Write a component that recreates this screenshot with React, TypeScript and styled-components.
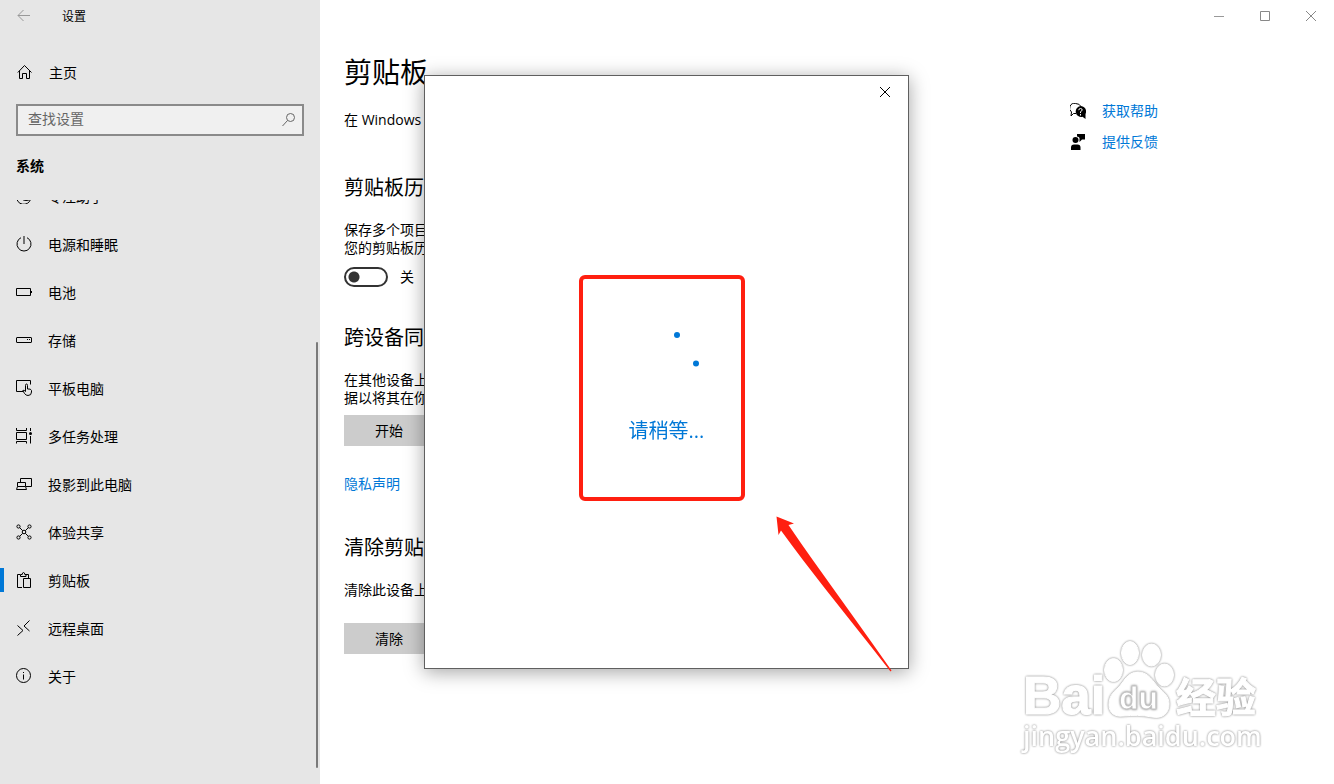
import React from "react";
import styled, { createGlobalStyle } from "styled-components";

const ACCENT = "#0078d7";
const MARK_RED = "#ff1f10";

const GlobalStyle = createGlobalStyle`
  * { box-sizing: border-box; }
  body {
    margin: 0;
    background: #fff;
    color: #000;
    font: 14px/18px "Open Sans", "Noto Sans CJK SC", sans-serif;
  }
  h1, h2, p, ul { margin: 0; padding: 0; }
  button, input { font: inherit; color: inherit; }
`;

const Page = styled.div`
  display: flex;
  min-height: 100vh;
`;

const Sidebar = styled.aside`
  position: relative;
  display: flex;
  flex-direction: column;
  flex: 0 0 320px;
  background: #e6e6e6;
`;

const TitleBar = styled.header`
  display: flex;
  align-items: center;
  gap: 22px;
  height: 32px;
  padding-left: 8px;
  font-size: 12px;
`;

const IconButton = styled.button<{ $width: number; $color?: string }>`
  display: flex;
  align-items: center;
  justify-content: center;
  width: ${(p) => p.$width}px;
  height: 32px;
  padding: 0;
  border: 0;
  background: transparent;
  color: ${(p) => p.$color ?? "#000"};
`;

const Label = styled.span`
  padding-top: 2px;
`;

const Glyph = styled.svg`
  display: block;
  flex: none;
  width: 16px;
  height: 16px;
  fill: none;
  stroke: currentColor;
  stroke-width: 1;
`;

const HomeLink = styled.a`
  display: flex;
  align-items: center;
  gap: 16px;
  height: 48px;
  margin-top: 16px;
  padding-left: 17px;
  color: #000;
  text-decoration: none;
`;

const SearchBox = styled.label`
  display: flex;
  align-items: center;
  height: 32px;
  margin: 8px 16px 0;
  padding: 0 5px 2px 10px;
  border: 2px solid #8a8a8a;
  background: #f0f0f0;
  color: #666;
`;

const SearchInput = styled.input`
  flex: 1;
  min-width: 0;
  padding: 0;
  border: 0;
  outline: 0;
  background: transparent;
  &::placeholder { color: #666; opacity: 1; }
`;

const GroupTitle = styled.h2`
  margin: 21px 16px 0;
  height: 43px;
  font-size: 14px;
  line-height: 18px;
  font-weight: 700;
`;

const NavScroll = styled.nav`
  flex: 1;
  overflow: hidden;
`;

const NavList = styled.ul`
  margin-top: -28px;
  list-style: none;
`;

const NavItem = styled.a<{ $active?: boolean }>`
  display: flex;
  align-items: center;
  gap: 16px;
  height: 48px;
  padding-left: 16px;
  color: #000;
  text-decoration: none;
  background: linear-gradient(${(p) => (p.$active ? `${ACCENT}, ${ACCENT}` : "transparent, transparent")}) left center / 4px 24px no-repeat;
`;

const ScrollThumb = styled.div`
  position: absolute;
  right: 2px;
  bottom: 16px;
  width: 2px;
  height: 426px;
  border-radius: 1px;
  background: #7a7a7a;
`;

const Main = styled.main`
  flex: 1;
  min-width: 0;
`;

const WindowControls = styled.div`
  display: flex;
  justify-content: flex-end;
  height: 32px;
`;

const Columns = styled.div`
  display: grid;
  grid-template-columns: minmax(0, 1fr) 264px;
  padding-left: 24px;
`;

const PageTitle = styled.h1`
  margin-top: 22px;
  font-size: 28px;
  line-height: 36px;
  font-weight: 400;
`;

const Intro = styled.p`
  margin-top: 21px;
`;

const Section = styled.section<{ $gap: number }>`
  margin-top: ${(p) => p.$gap}px;
`;

const SectionTitle = styled.h2`
  margin-bottom: 19px;
  font-size: 20px;
  line-height: 28px;
  font-weight: 400;
`;

const ToggleRow = styled.label`
  display: flex;
  align-items: center;
  gap: 12px;
  height: 20px;
  margin-top: 10px;
`;

const Toggle = styled.input`
  appearance: none;
  width: 44px;
  height: 20px;
  margin: 0;
  border: 2px solid #333;
  border-radius: 10px;
  background: radial-gradient(circle at 8px 8px, #333 5px, transparent 6px);
`;

const ActionButton = styled.button<{ $gap: number }>`
  display: block;
  width: 90px;
  height: 31px;
  margin-top: ${(p) => p.$gap}px;
  padding: 0;
  border: 0;
  background: #ccc;
`;

const TextLink = styled.a`
  color: ${ACCENT};
  text-decoration: none;
`;

const PrivacyRow = styled.p`
  margin-top: 29px;
`;

const HelpList = styled.div`
  display: flex;
  flex-direction: column;
  gap: 13px;
  padding-top: 70px;
`;

const HelpRow = styled(TextLink)`
  display: flex;
  align-items: center;
  gap: 16px;
`;

const Overlay = styled.div`
  position: fixed;
  inset: 75px 1px 0 0;
  display: flex;
  justify-content: center;
  align-items: flex-start;
  pointer-events: none;
`;

const Dialog = styled.div`
  position: relative;
  display: flex;
  flex-direction: column;
  align-items: center;
  width: 485px;
  height: 594px;
  border: 1px solid #5f5f5f;
  background: #fff;
  box-shadow: 0 3px 18px rgba(0, 0, 0, 0.36);
  pointer-events: auto;
`;

const DialogBar = styled.div`
  display: flex;
  justify-content: flex-end;
  align-self: stretch;
  height: 32px;
`;

const Spinner = styled.svg`
  margin-top: 220px;
  width: 65px;
  height: 72px;
  fill: ${ACCENT};
`;

const Waiting = styled.p`
  margin-top: 17px;
  color: ${ACCENT};
  font-size: 20px;
  line-height: 28px;
`;

const MarkFrame = styled.div`
  position: absolute;
  left: 154px;
  top: 199px;
  width: 166px;
  height: 226px;
  border: 4px solid ${MARK_RED};
  border-radius: 6px;
`;

const MarkArrow = styled.svg`
  position: absolute;
  left: 351px;
  top: 440px;
  width: 116px;
  height: 157px;
  fill: ${MARK_RED};
`;

const Watermark = styled.svg`
  position: fixed;
  right: 64px;
  bottom: 24px;
  width: 254px;
  height: 124px;
  fill: #fff;
  stroke: #fff;
  stroke-width: 1;
  stroke-linejoin: round;
  & > * {
    filter: drop-shadow(0 0 1px rgba(0, 0, 0, 0.36)) drop-shadow(0 0 1px rgba(0, 0, 0, 0.16));
  }
`;

const nav: { label: string; icon: React.ReactNode; active?: boolean }[] = [
  { label: "专注助手", icon: <path d="M5.500.500Q0 3 .8 9a7 6.500 0 0 0 13.700 2.500Q7 14.500 4.500 9 3.300 4.500 5.500.500Z" /> },
  { label: "电源和睡眠", icon: <path d="M8 0v8M5 1.700a7 7 0 1 0 6 0" /> },
  { label: "电池", icon: <><path d="M.5 4.500h14v7H.5Z" /><path d="M15.500 7v2" /></> },
  { label: "存储", icon: <><rect x=".5" y="5.500" width="15" height="5" rx=".5" /><path d="M11 7.500h1M13 7.500h1" /></> },
  {
    label: "平板电脑",
    icon: (
      <>
        <path d="M7 11.500H.5v-11h14v4" />
        <path d="M9.500 11.500V5.500q0-1.500 1-1.500t1 1.500V9q3.500-.5 4 1.500v1.500q0 3.500-3.500 3.500-2 0-3.500-2L6.800 10.500q1.200-1 2.700 1" />
      </>
    ),
  },
  {
    label: "多任务处理",
    icon: (
      <>
        <path d="M.5 0v2.500h10V0M.5 15.500V13.500h10v2M.5 4.500h10v7H.5ZM14.500 0v3M14.500 8v7.500" />
        <circle cx="14.500" cy="5.500" r="1.500" fill="currentColor" stroke="none" />
      </>
    ),
  },
  { label: "投影到此电脑", icon: <path d="M4.500 6V2.500h11v8H10M1.500 6.500h8v4h-8ZM1.500 10.500L.5 13.500h10l-1-3" /> },
  {
    label: "体验共享",
    icon: (
      <>
        <circle cx="2.500" cy="2.500" r="1.600" /><circle cx="13.500" cy="2.500" r="1.600" />
        <circle cx="2.500" cy="13.500" r="1.600" /><circle cx="13.500" cy="13.500" r="1.600" />
        <circle cx="8" cy="8" r="1.800" />
        <path d="M3.700 3.700l3 3M12.300 3.700l-3 3M3.700 12.300l3-3M12.300 12.300l-3-3" />
      </>
    ),
  },
  {
    label: "剪贴板",
    active: true,
    icon: (
      <>
        <path d="M6 15.500H1.500v-13H4M10 2.500h2.500V6M4.500 4.500v-2h1.700q.1-2 1.300-2t1.300 2h1.200v2Z" />
        <path d="M7.500 6.500h7v9h-7Z" />
      </>
    ),
  },
  { label: "远程桌面", icon: <path d="M1.500 5.500l5.500 5-5.500 5M13.500.5l-5.500 5.500 5.500 5" /> },
  { label: "关于", icon: <><circle cx="7.500" cy="7.500" r="7" /><path d="M7.500 6.500v5M7.500 4v1" /></> },
];

export default function App() {
  return (
    <>
      <GlobalStyle />
      <Page>
        <Sidebar>
          <TitleBar>
            <IconButton $width={32} $color="#999" aria-label="后退">
              <Glyph viewBox="0 0 16 16"><path d="M14 7.500H2M7.500 2L2 7.500 7.500 13" /></Glyph>
            </IconButton>
            <Label>设置</Label>
          </TitleBar>
          <HomeLink href="#home">
            <Glyph viewBox="0 0 16 16"><path d="M.8 8.500L7.500 1.500l7 7M2.500 6.700v7.800h3v-5h4v5h3V6.700" /></Glyph>
            <Label>主页</Label>
          </HomeLink>
          <SearchBox>
            <SearchInput type="text" placeholder="查找设置" aria-label="查找设置" />
            <Glyph viewBox="0 0 16 16"><circle cx="9.500" cy="6.500" r="4" /><path d="M6.500 9.500L1.500 15" /></Glyph>
          </SearchBox>
          <GroupTitle>系统</GroupTitle>
          <NavScroll>
            <NavList>
              {nav.map((n) => (
                <li key={n.label}>
                  <NavItem href="#" $active={n.active}>
                    <Glyph viewBox="0 0 16 16">{n.icon}</Glyph>
                    <Label>{n.label}</Label>
                  </NavItem>
                </li>
              ))}
            </NavList>
          </NavScroll>
          <ScrollThumb />
        </Sidebar>

        <Main>
          <WindowControls>
            <IconButton $width={46} $color="#999" aria-label="最小化">
              <Glyph viewBox="0 0 16 16"><path d="M3 8.500h10" /></Glyph>
            </IconButton>
            <IconButton $width={46} $color="#888" aria-label="最大化">
              <Glyph viewBox="0 0 16 16"><path d="M3.500 3.500h9v9h-9Z" /></Glyph>
            </IconButton>
            <IconButton $width={46} $color="#888" aria-label="关闭">
              <Glyph viewBox="0 0 16 16"><path d="M3 3l10 10M13 3L3 13" /></Glyph>
            </IconButton>
          </WindowControls>
          <Columns>
            <div>
              <PageTitle>剪贴板</PageTitle>
              <Intro>在 Windows 中复制或剪切某些内容时</Intro>
              <Section $gap={45}>
                <SectionTitle>剪贴板历史记录</SectionTitle>
                <p>保存多个项目到剪贴板以备稍后使用<br />您的剪贴板历史记录并粘贴其中的内容</p>
                <ToggleRow>
                  <Toggle type="checkbox" role="switch" />
                  关
                </ToggleRow>
              </Section>
              <Section $gap={37}>
                <SectionTitle>跨设备同步</SectionTitle>
                <p>在其他设备上粘贴文本。登录后可同步数<br />据以将其在你的设备之间使用</p>
                <ActionButton $gap={8}>开始</ActionButton>
                <PrivacyRow><TextLink href="#privacy">隐私声明</TextLink></PrivacyRow>
              </Section>
              <Section $gap={41}>
                <SectionTitle>清除剪贴板数据</SectionTitle>
                <p>清除此设备上和 Microsoft 的剪贴板</p>
                <ActionButton $gap={24}>清除</ActionButton>
              </Section>
            </div>
            <HelpList>
              <HelpRow href="#help">
                <Glyph viewBox="0 0 16 16" color="#000">
                  <path d="M6 10.500H3.500L1 13 1.500 9A4.800 4.800 0 0 1 5.500.5q4 0 5.500 3" />
                  <path d="M10.500 3a5.500 5.500 0 0 1 5 8V16l-3-2.200A5.500 5.500 0 1 1 10.500 3Z" fill="currentColor" stroke="none" />
                  <path d="M8.800 7.200q0-1.700 1.700-1.700t1.700 1.500q0 .8-1.700 1.700v1.300M10.500 11v1.500" stroke="#fff" />
                </Glyph>
                获取帮助
              </HelpRow>
              <HelpRow href="#feedback">
                <Glyph viewBox="0 0 16 16" color="#000">
                  <g fill="currentColor" stroke="none">
                    <circle cx="5.500" cy="6" r="3" />
                    <path d="M1 16v-2.500Q1 10.500 4 10.500h3.500q3 0 3 3V16ZM7 0h8v5.500h-3L9.500 8V4Q9 2.500 7 2.500Z" />
                  </g>
                </Glyph>
                提供反馈
              </HelpRow>
            </HelpList>
          </Columns>
        </Main>
      </Page>

      <Watermark viewBox="0 0 254 124" aria-label="Baidu 经验">
        <text x="7" y="78" fontSize="53" fontWeight="700" fontFamily="'Liberation Sans', sans-serif">Bai</text>
        <text x="160" y="76" fontSize="40" fontWeight="700" strokeWidth="1" fontFamily="'Noto Sans CJK SC', sans-serif">经验</text>
        <ellipse cx="97.500" cy="34" rx="9" ry="11.500" />
        <ellipse cx="114" cy="17" rx="8.500" ry="11.500" />
        <ellipse cx="135.500" cy="19" rx="9" ry="11" />
        <ellipse cx="148.500" cy="39" rx="9" ry="11" />
        <path d="M122 36c-11 0-14 10-20 16-6 5-9 9-9 17 0 8 6 12 14 11 10-1 19-1 29 1 11 2 17-4 17-13 0-8-5-11-10-16-6-6-10-16-21-16Z" />
        <text x="103" y="73" fontSize="32" fontWeight="700" stroke="#c4c4c4" fontFamily="'Liberation Sans', sans-serif">du</text>
        <text x="7" y="110" fontSize="27" fontWeight="600" strokeWidth="0" fontFamily="'Open Sans', sans-serif">jingyan.baidu.com</text>
      </Watermark>

      <Overlay>
        <Dialog role="dialog" aria-label="请稍等">
          <DialogBar>
            <IconButton $width={46} aria-label="关闭">
              <Glyph viewBox="0 0 16 16"><path d="M3 3l10 10M13 3L3 13" /></Glyph>
            </IconButton>
          </DialogBar>
          <Spinner viewBox="0 0 65 72"><circle cx="43" cy="7" r="3" /><circle cx="62" cy="35.500" r="3" /></Spinner>
          <Waiting>请稍等...</Waiting>
          <MarkFrame />
          <MarkArrow viewBox="0 0 116 157">
            <path d="M.5.500L18 7.500 12.500 9C45 57 82 106 115.500 154.500l-1 1C78 108 40 63 5 14.500L2.500 19Z" />
          </MarkArrow>
        </Dialog>
      </Overlay>
    </>
  );
}
